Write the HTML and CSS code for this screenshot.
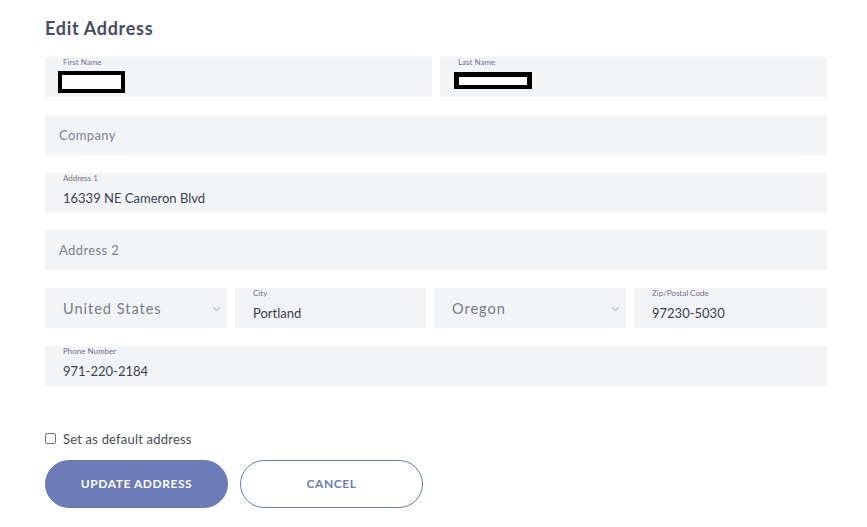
FILE: index.html
```html
<!DOCTYPE html>
<html>
<head>
<meta charset="utf-8">
<link rel="stylesheet" href="styles.css">
</head>
<body>
<div class="page">
  <h1 class="title">Edit Address</h1>
  <div class="form">
    <div class="row two">
      <div class="field labeled">
        <span class="label">First Name</span>
        <span class="value"><span class="redact r1"></span></span>
      </div>
      <div class="field labeled">
        <span class="label">Last Name</span>
        <span class="value"><span class="redact r2"></span></span>
      </div>
    </div>
    <div class="row">
      <div class="field placeholder">Company</div>
    </div>
    <div class="row">
      <div class="field labeled">
        <span class="label">Address 1</span>
        <span class="value">16339 NE Cameron Blvd</span>
      </div>
    </div>
    <div class="row">
      <div class="field placeholder">Address 2</div>
    </div>
    <div class="row four">
      <div class="field select">
        <span>United States</span>
        <svg class="chev" width="9" height="6" viewBox="0 0 9 6"><path d="M1 1.2 L4.5 4.5 L8 1.2" fill="none" stroke="#8fa6a6" stroke-width="1"/></svg>
      </div>
      <div class="field labeled">
        <span class="label">City</span>
        <span class="value">Portland</span>
      </div>
      <div class="field select">
        <span>Oregon</span>
        <svg class="chev" width="9" height="6" viewBox="0 0 9 6"><path d="M1 1.2 L4.5 4.5 L8 1.2" fill="none" stroke="#8fa6a6" stroke-width="1"/></svg>
      </div>
      <div class="field labeled">
        <span class="label">Zip/Postal Code</span>
        <span class="value">97230-5030</span>
      </div>
    </div>
    <div class="row">
      <div class="field labeled">
        <span class="label">Phone Number</span>
        <span class="value">971-220-2184</span>
      </div>
    </div>
  </div>
  <label class="check">
    <span class="box"></span>
    <span>Set as default address</span>
  </label>
  <div class="buttons">
    <button class="btn primary">UPDATE ADDRESS</button>
    <button class="btn outline">CANCEL</button>
  </div>
</div>
</body>
</html>
```

FILE: styles.css
```css
html, body {
  margin: 0;
  padding: 0;
  background: #ffffff;
}
body {
  font-family: Lato, "Open Sans", "Liberation Sans", sans-serif;
  color: #3b3f51;
}
.page {
  padding: 15px 40px 0 45px;
  width: 782px;
}
.title {
  margin: 0;
  font-size: 18px;
  line-height: 26px;
  font-weight: 700;
  color: #474c63;
  letter-spacing: 0.7px;
}
.form {
  margin-top: 16px;
  display: flex;
  flex-direction: column;
  gap: 17.8px;
}
.row {
  display: grid;
  grid-template-columns: 1fr;
  height: 40px;
}
.row.two {
  grid-template-columns: 1fr 1fr;
  gap: 8px;
}
.row.four {
  grid-template-columns: 182px 191px 192px 193px;
  gap: 8px;
}
.field {
  background: #f3f4f6;
  height: 40px;
  box-sizing: border-box;
}
.labeled {
  display: flex;
  flex-direction: column;
  padding: 0 18px 0 18px;
}
.label {
  font-size: 8px;
  line-height: 10px;
  color: #766e8c;
}
.value {
  font-size: 13px;
  line-height: 18px;
  margin-top: 6px;
  color: #3b3f51;
}
.placeholder {
  display: flex;
  align-items: center;
  padding-left: 14px;
  font-size: 13px;
  letter-spacing: 0.4px;
  color: #7c8191;
}
.select {
  display: flex;
  align-items: center;
  justify-content: space-between;
  padding: 0 6px 0 18px;
  font-size: 14.5px;
  letter-spacing: 1px;
  color: #757a8a;
}
.chev {
  display: block;
  margin-top: 2px;
}
.redact {
  display: block;
  box-sizing: border-box;
  border: 4px solid #000;
  background: #fff;
  margin-top: -2px;
}
.r1 {
  width: 67px;
  height: 22px;
  margin-left: -5px;
}
.r2 {
  width: 78px;
  height: 17px;
  margin-left: -4px;
  margin-top: -1px;
  border-width: 5px 5px 4px 5px;
}
.check {
  display: flex;
  align-items: center;
  gap: 7px;
  margin-top: 45px;
  font-size: 13px;
  color: #474b5c;
  letter-spacing: 0.2px;
}
.box {
  width: 11px;
  height: 11px;
  box-sizing: border-box;
  border: 1px solid #6f7280;
  border-radius: 2px;
  background: #fff;
}
.buttons {
  display: flex;
  gap: 12px;
  margin-top: 13px;
}
.btn {
  width: 183px;
  height: 48px;
  border-radius: 24px;
  font-family: Lato, "Open Sans", "Liberation Sans", sans-serif;
  font-size: 12px;
  font-weight: 700;
  letter-spacing: 0.55px;
  cursor: pointer;
}
.primary {
  background: #6b7bb8;
  border: 1px solid #6b7bb8;
  color: #ffffff;
}
.outline {
  background: #ffffff;
  border: 1px solid #6b7bb8;
  color: #6b7bb8;
}
```
